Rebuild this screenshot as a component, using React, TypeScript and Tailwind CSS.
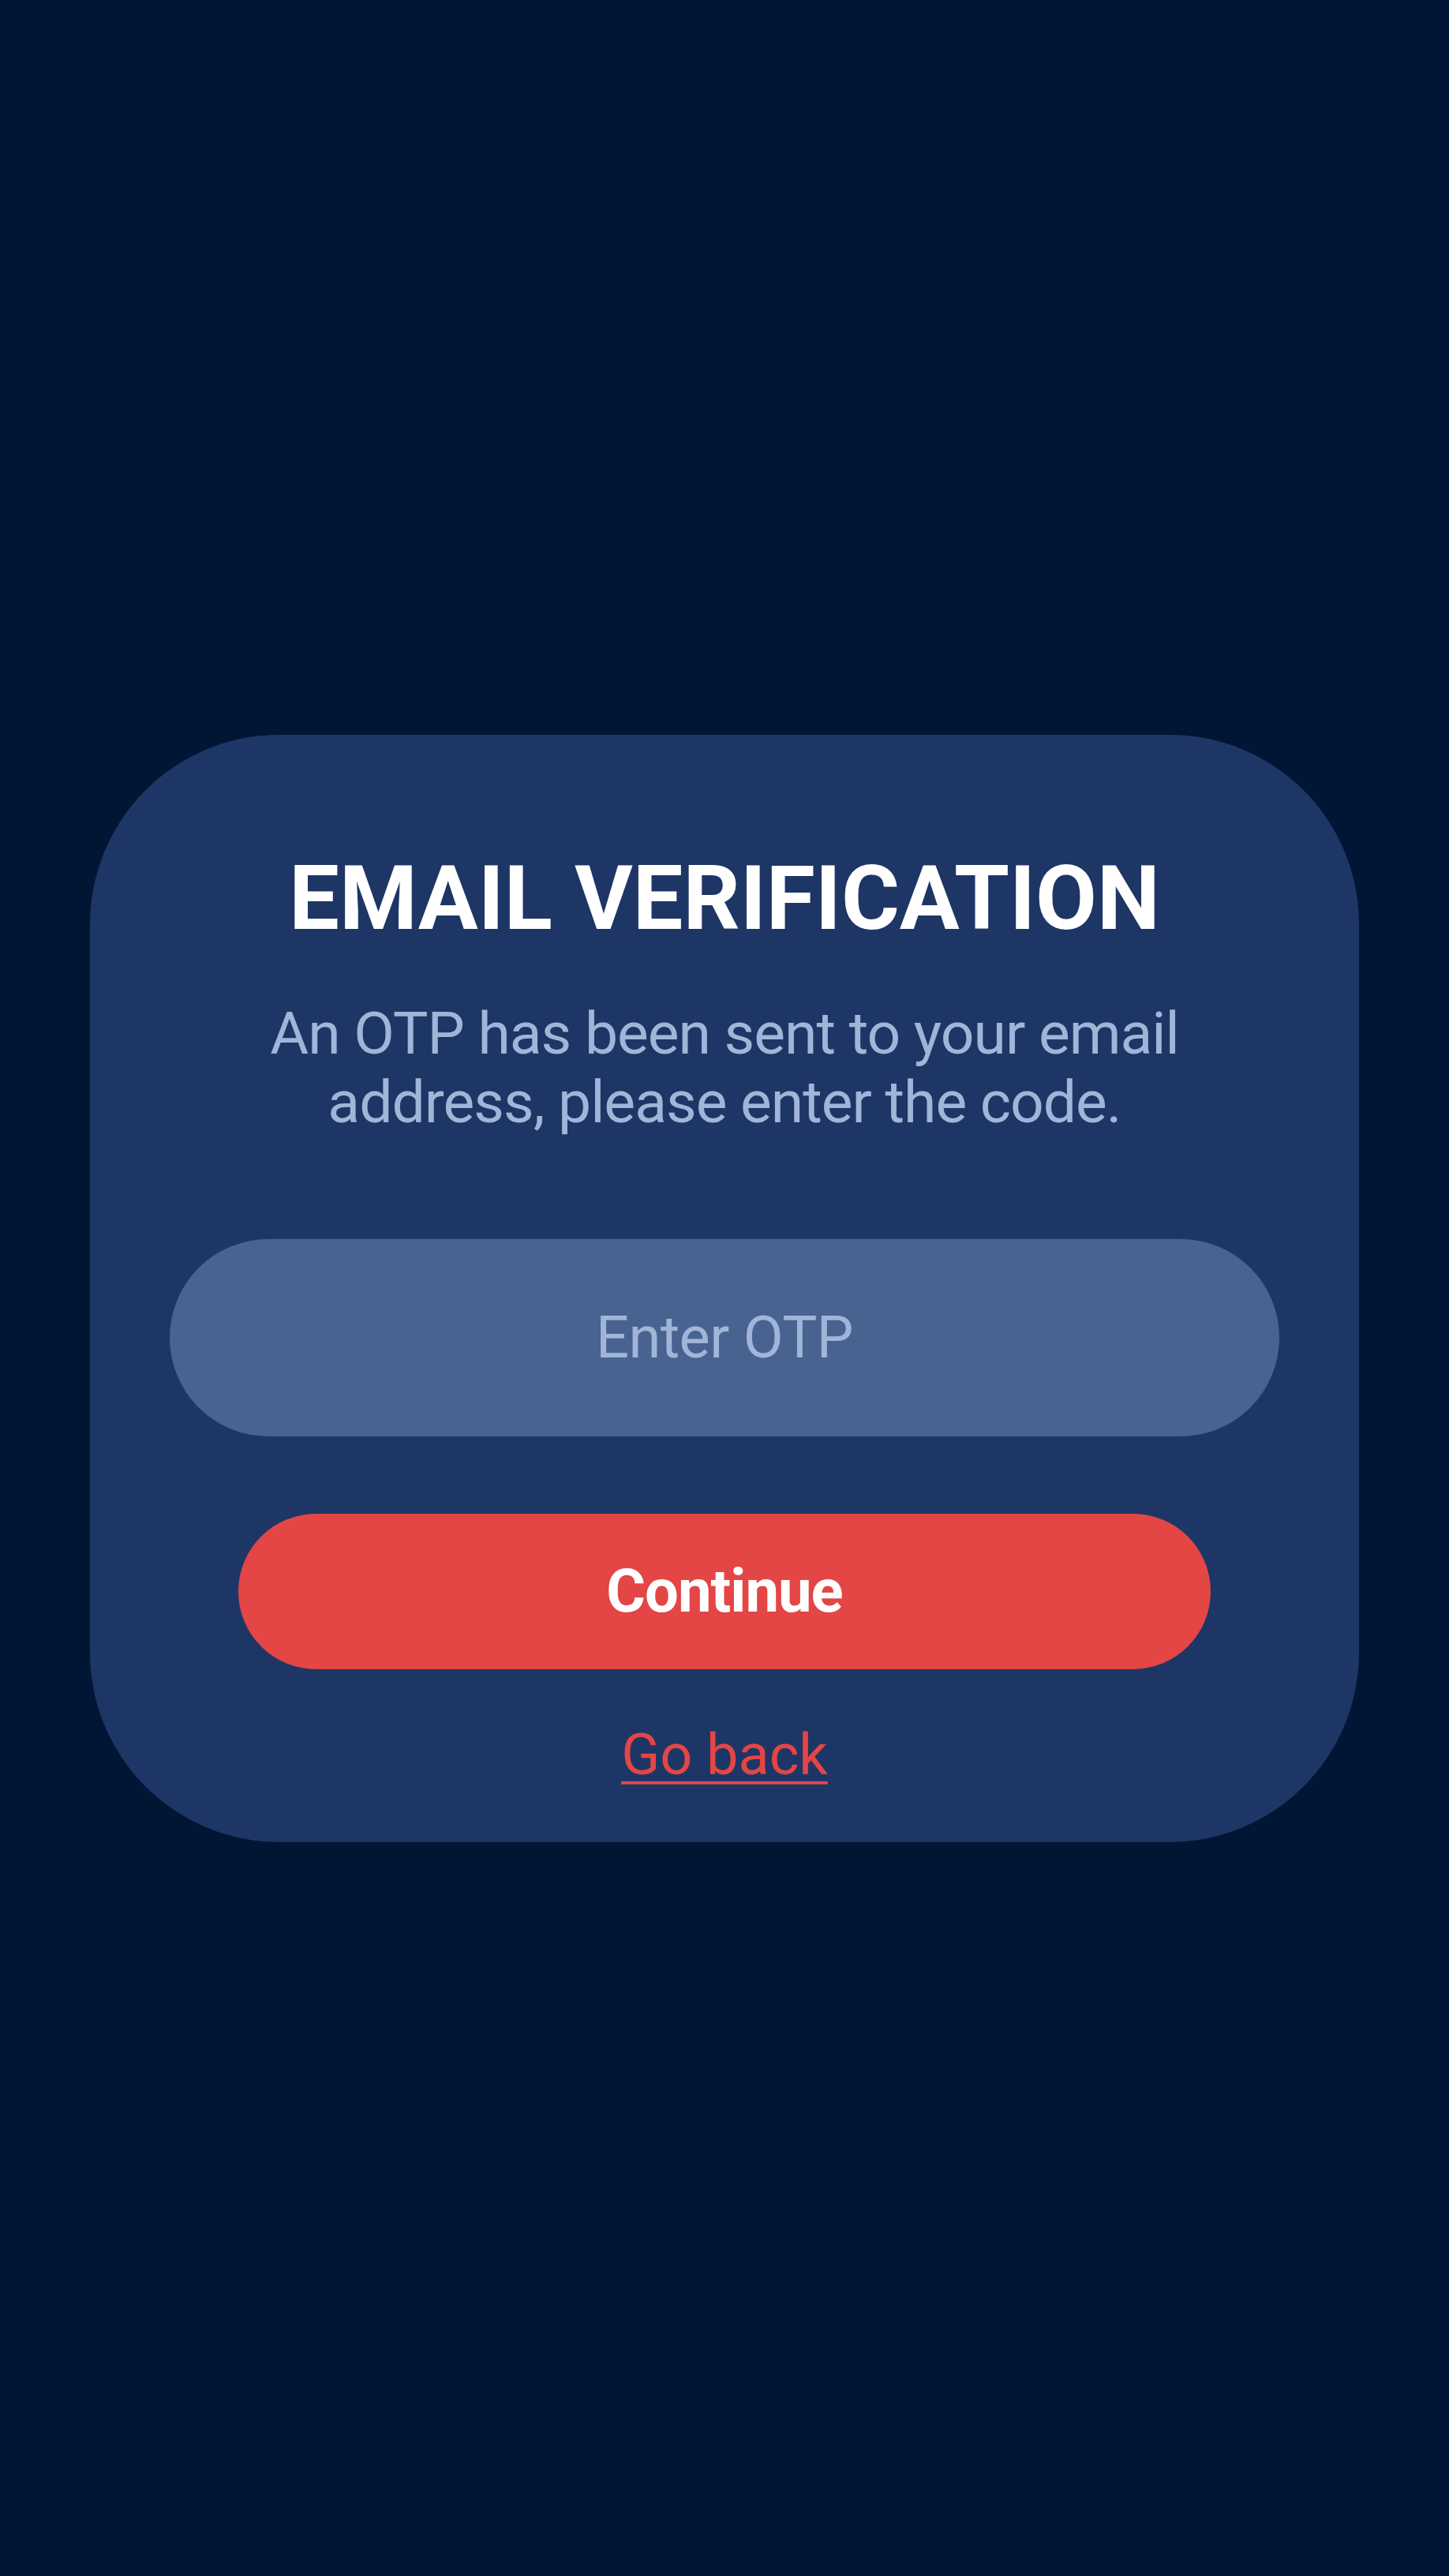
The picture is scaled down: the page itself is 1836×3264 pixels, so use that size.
export default function App() {
  return (
    <div className="min-h-screen w-full bg-[#011634] flex items-center px-[114px] font-['Roboto',sans-serif]">
      <div className="w-full bg-[#1e3665] rounded-[240px] pt-[141px] pb-[68px] px-[101px] flex flex-col items-center">
        {/* Heading */}
        <h1 className="text-[113px] leading-[134px] font-bold text-white tracking-normal text-center">
          EMAIL VERIFICATION
        </h1>
        <p className="mt-[60px] max-w-[1200px] text-[75px] leading-[87px] tracking-[-1px] text-[#a1b5d8] text-center">
          An OTP has been sent to your email address, please enter the code.
        </p>

        {/* OTP input */}
        <input
          type="text"
          placeholder="Enter OTP"
          className="mt-[130px] w-full h-[250px] rounded-full bg-[#48638f] text-center text-[74px] tracking-[-0.5px] text-white placeholder:text-[#a1b5d8] outline-none"
        />

        {/* Actions */}
        <button className="mt-[98px] w-[1232px] h-[197px] rounded-full bg-[#e44545] text-white text-[76px] tracking-[-1px] font-bold">
          Continue
        </button>
        <a
          href="#"
          className="mt-[67px] text-[72px] leading-[84px] text-[#e44545] underline decoration-[4px] underline-offset-[9px]"
        >
          Go back
        </a>
      </div>
    </div>
  );
}
